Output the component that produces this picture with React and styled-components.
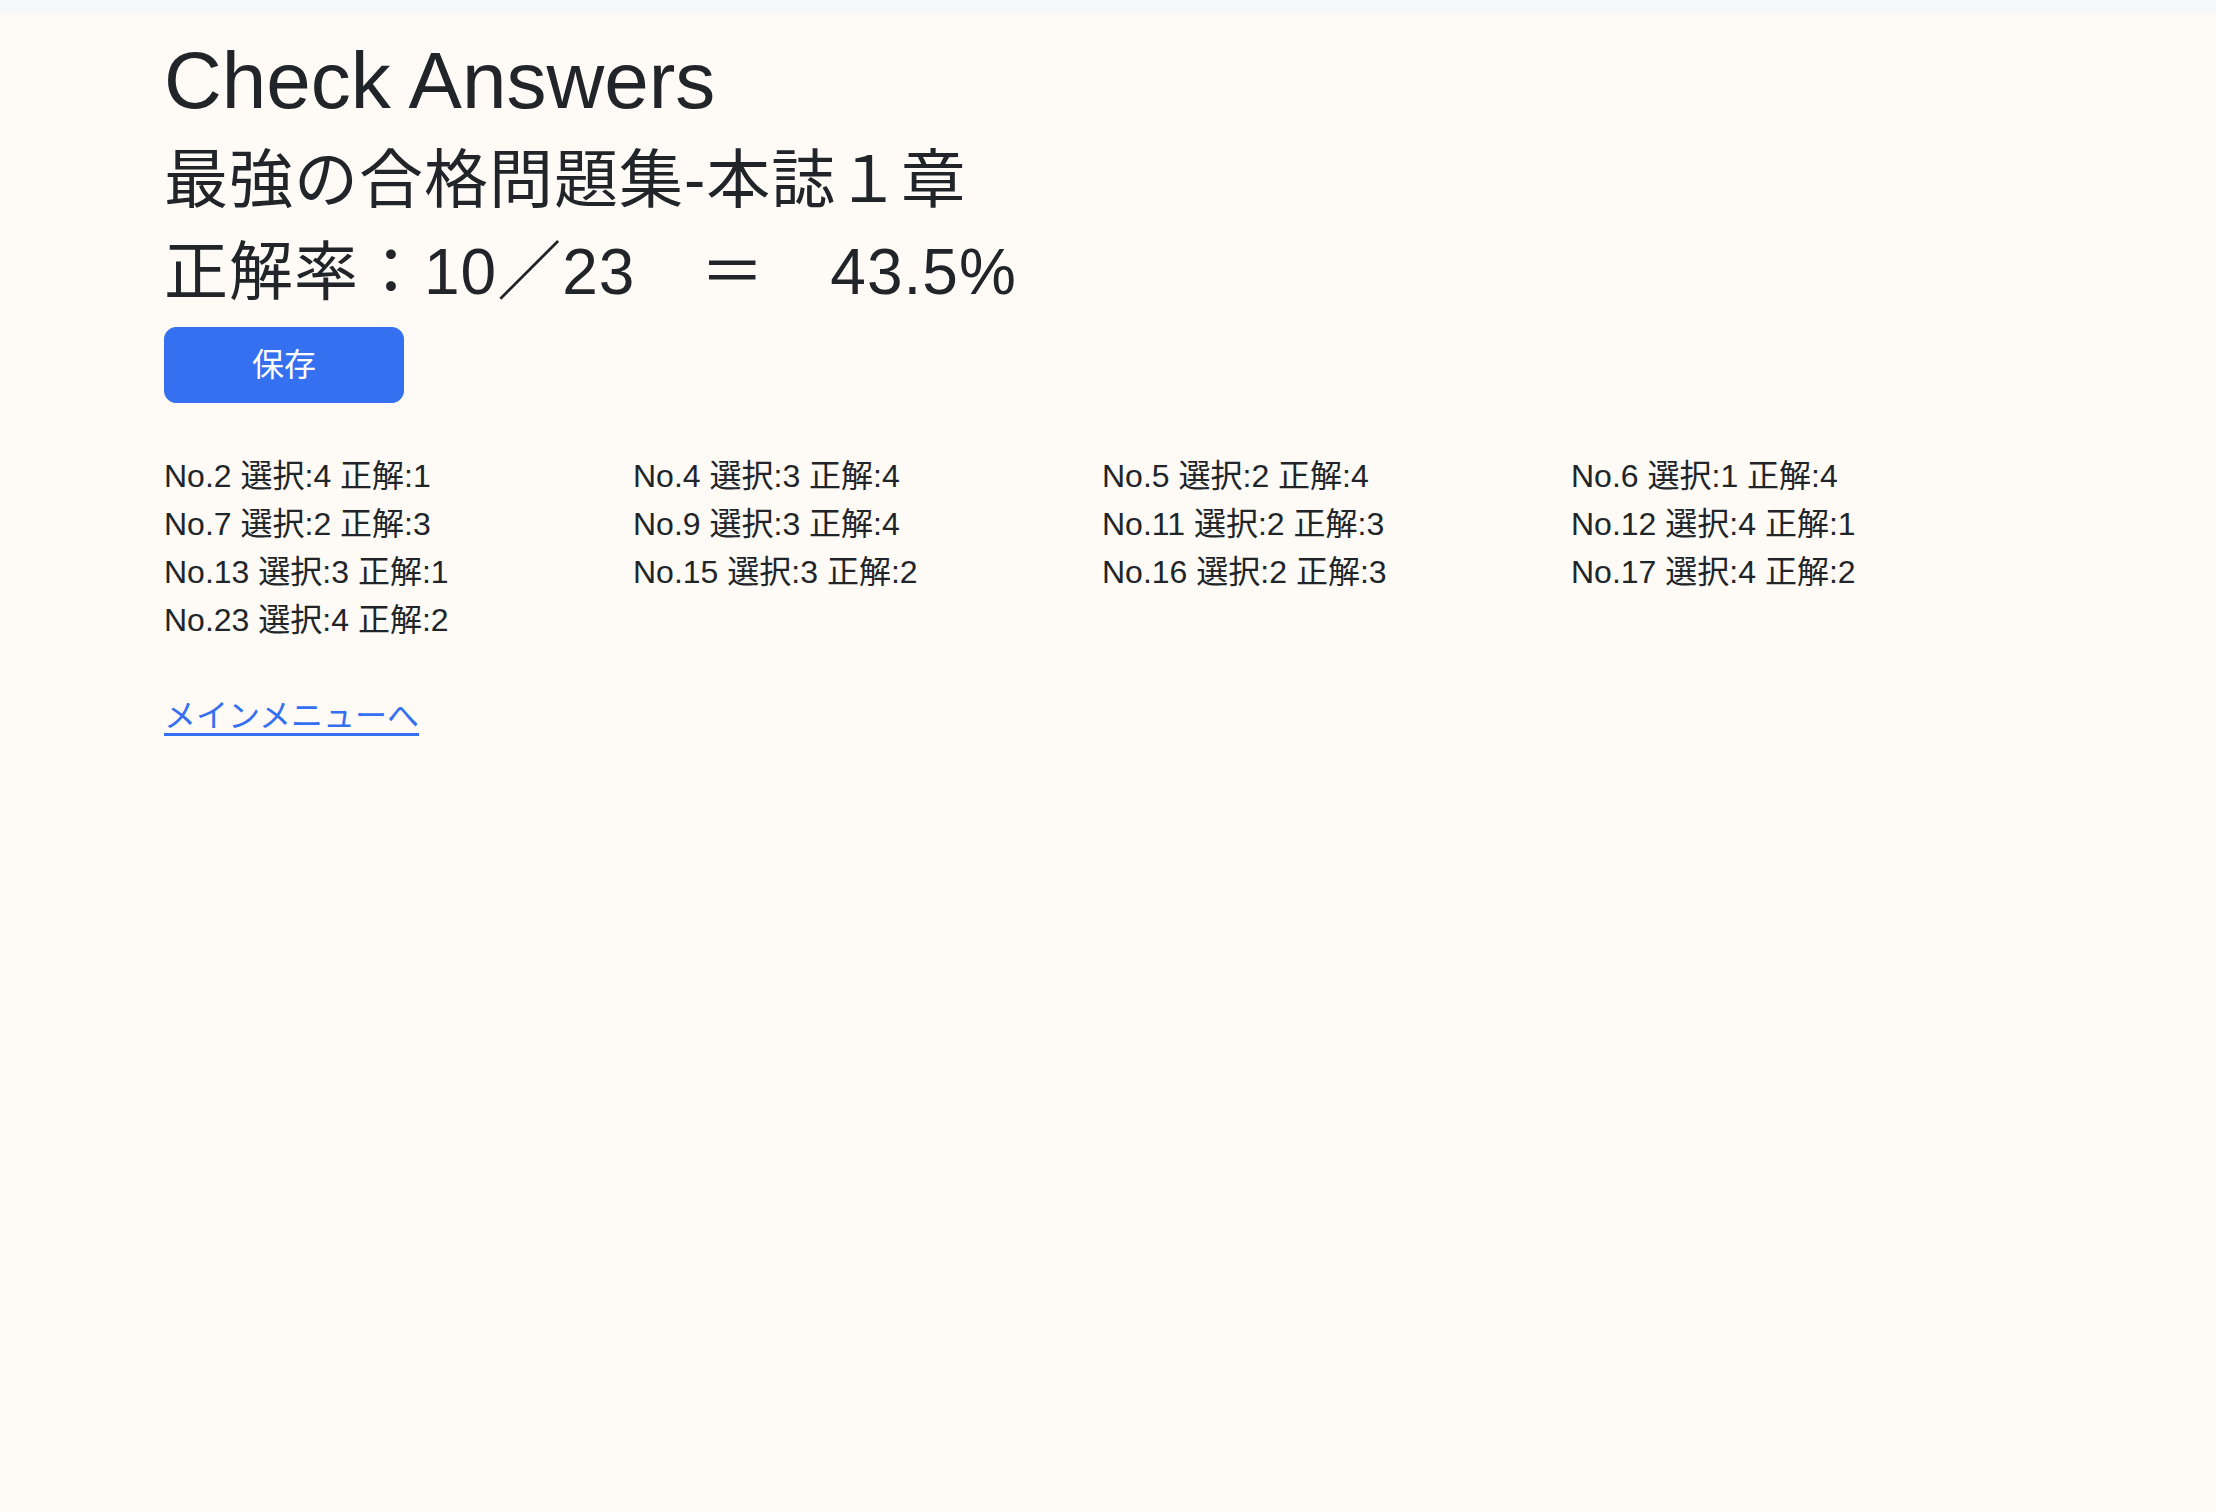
import React from "react";
import styled, { createGlobalStyle } from "styled-components";

const GlobalStyle = createGlobalStyle`
  html, body {
    margin: 0;
    padding: 0;
    background: #fefbf6;
  }

  body {
    font-family: "Liberation Sans", "Noto Sans CJK JP", sans-serif;
    font-size: 32px;
    line-height: 1.5;
    color: #212529;
  }
`;

const TopBar = styled.div`
  height: 14px;
  background: #f7f8fa;
`;

const Container = styled.main`
  width: 1872px;
  margin-left: 164px;
  padding-top: 21px;
  padding-bottom: 40px;
`;

const Title = styled.h1`
  margin: 0 0 16px;
  font-size: 80px;
  font-weight: 500;
  line-height: 92px;
`;

const Heading = styled.h2`
  margin: 0 0 17px;
  font-size: 64px;
  font-weight: 400;
  line-height: 75px;
  letter-spacing: 1px;
`;

const SaveButton = styled.button`
  display: block;
  width: 240px;
  height: 76px;
  padding: 12px 24px;
  border: 1px solid #3470f0;
  border-radius: 12px;
  background: #3470f0;
  color: #fff;
  font-family: inherit;
  font-size: 32px;
  line-height: 1.5;
  cursor: pointer;
`;

const ResultGrid = styled.div`
  display: grid;
  grid-template-columns: repeat(4, 469px);
  margin: 49px 0 48px;
`;

const ResultItem = styled.div`
  height: 48px;
  white-space: nowrap;
`;

const MenuLink = styled.a`
  color: #3470f0;
  text-decoration: underline;
  text-decoration-thickness: 3px;
  text-underline-offset: 6px;
`;

const results = [
  [2, 4, 1], [4, 3, 4], [5, 2, 4], [6, 1, 4],
  [7, 2, 3], [9, 3, 4], [11, 2, 3], [12, 4, 1],
  [13, 3, 1], [15, 3, 2], [16, 2, 3], [17, 4, 2],
  [23, 4, 2],
];

const App = () => (
  <>
    <GlobalStyle />
    <TopBar />
    <Container>
      <Title>Check Answers</Title>
      <Heading>最強の合格問題集-本誌１章</Heading>
      <Heading>正解率：10／23　＝　43.5%</Heading>
      <SaveButton type="button">保存</SaveButton>
      <ResultGrid>
        {results.map(([no, selected, answer]) => (
          <ResultItem key={no}>
            No.{no} 選択:{selected} 正解:{answer}
          </ResultItem>
        ))}
      </ResultGrid>
      <MenuLink href="#">メインメニューへ</MenuLink>
    </Container>
  </>
);

export default App;
